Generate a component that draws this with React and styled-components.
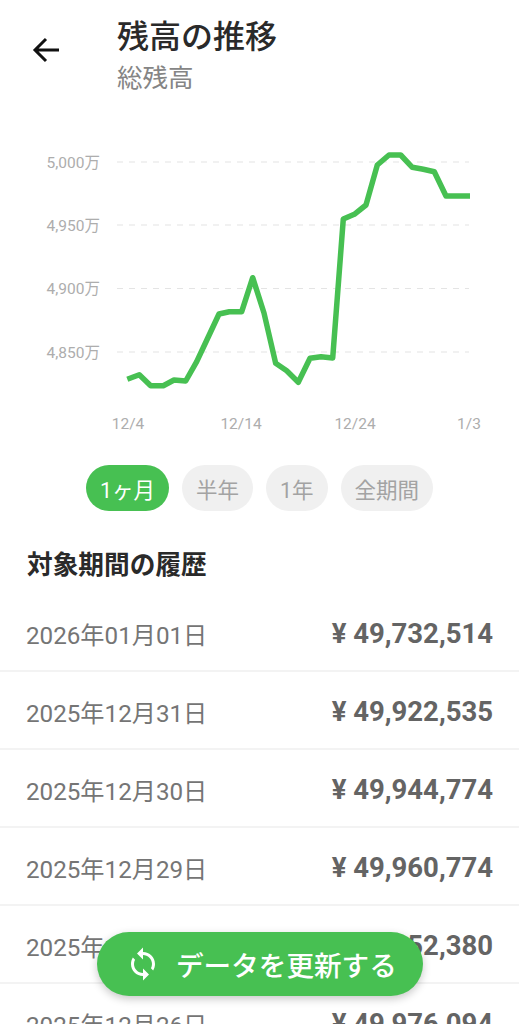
import React from "react"
import styled, { createGlobalStyle } from "styled-components"

const GlobalStyle = createGlobalStyle`
  html, body {
    margin: 0;
    padding: 0;
    background: #fff;
    font-family: Roboto, "Noto Sans CJK JP", sans-serif;
  }
`

const Screen = styled.div`
  position: relative;
  width: 519px;
  height: 1024px;
  overflow: hidden;
  background: #fff;
`

const Header = styled.header`
  display: flex;
  align-items: flex-start;
  height: 115px;
  padding: 15px 0 0 32px;
  box-sizing: border-box;
`

const BackButton = styled.div`
  width: 85px;
  padding-top: 21px;
  line-height: 0;
`

const Titles = styled.div`
  display: flex;
  flex-direction: column;
`

const Title = styled.h1`
  margin: 0;
  font-size: 32px;
  line-height: 44px;
  font-weight: 500;
  color: #2a2a2a;
`

const Subtitle = styled.div`
  font-size: 25.5px;
  line-height: 38px;
  color: #858585;
`

const Chart = styled.svg`
  display: block;
  width: 519px;
  height: 350px;
`

const GridLine = styled.line`
  stroke: #e4e4e4;
  stroke-width: 1.2;
  stroke-dasharray: 6 6;
`

const AxisLabel = styled.text`
  font-size: 15.5px;
  fill: #adadad;
`

const Ranges = styled.div`
  display: flex;
  justify-content: center;
  gap: 13px;
`

const RangePill = styled.div`
  display: flex;
  align-items: center;
  height: 46px;
  padding: 0 14px;
  border-radius: 23px;
  font-size: 21.5px;
  background: ${p => (p.$active ? "#47c052" : "#f0f0f0")};
  color: ${p => (p.$active ? "#fff" : "#a3a3a3")};
`

const SectionTitle = styled.h2`
  margin: 0;
  padding: 34px 27px 0;
  height: 49px;
  font-size: 25.7px;
  line-height: 40px;
  font-weight: 700;
  color: #2a2a2a;
`

const Row = styled.div`
  display: flex;
  align-items: center;
  justify-content: space-between;
  height: 78px;
  padding: 3px 26px 0;
  box-sizing: border-box;
  border-bottom: 2px solid #f3f3f3;
`

const RowDate = styled.span`
  font-size: 24.2px;
  color: #757575;
`

const RowAmount = styled.span`
  font-size: 27.5px;
  font-weight: 700;
  color: #646464;
`

const UpdateButton = styled.div`
  position: absolute;
  left: 97px;
  top: 932px;
  display: flex;
  align-items: center;
  gap: 15px;
  width: 326px;
  height: 64px;
  padding-left: 28px;
  box-sizing: border-box;
  border-radius: 32px;
  background: #47c052;
  color: #fff;
  font-size: 27.6px;
  font-weight: 500;
  box-shadow: 0 3px 8px rgba(0, 0, 0, 0.22);
`

const points = [
  [127.3, 379.3], [139.3, 374.7], [150.7, 385.7], [163.3, 385.7], [174, 380], [185.7, 381],
  [196.7, 361.7], [207.3, 339], [219, 314], [229.3, 311.7], [241.7, 311.7], [252.7, 277.7],
  [264, 313], [275.7, 363.3], [286.7, 370.7], [298.3, 382.3], [310, 358.3], [321, 356.7],
  [332.7, 358], [343.3, 219], [354.3, 214.3], [366, 205], [377.3, 165], [389, 155],
  [400.7, 155], [412.3, 167.3], [423.3, 169.3], [434.3, 171.7], [446, 196], [470, 196],
]

const CHART_TOP = 115
const yTicks = [
  { y: 162, label: "5,000万" },
  { y: 225, label: "4,950万" },
  { y: 288.5, label: "4,900万" },
  { y: 352, label: "4,850万" },
]
const xTicks = [
  { x: 128, label: "12/4" },
  { x: 241, label: "12/14" },
  { x: 355, label: "12/24" },
  { x: 469, label: "1/3" },
]

const history = [
  { date: "2026年01月01日", amount: "¥ 49,732,514" },
  { date: "2025年12月31日", amount: "¥ 49,922,535" },
  { date: "2025年12月30日", amount: "¥ 49,944,774" },
  { date: "2025年12月29日", amount: "¥ 49,960,774" },
  { date: "2025年12月28日", amount: "¥ 49,952,380" },
  { date: "2025年12月26日", amount: "¥ 49,976,094" },
]

const ranges = ["1ヶ月", "半年", "1年", "全期間"]

export default function App() {
  return (
    <Screen>
      <GlobalStyle />
      <Header>
        <BackButton>
          <svg width="28" height="28" viewBox="0 0 28 28" fill="none" stroke="#111" strokeWidth="3">
            <path d="M27 14H3M14 3L3 14l11 11" />
          </svg>
        </BackButton>
        <Titles>
          <Title>残高の推移</Title>
          <Subtitle>総残高</Subtitle>
        </Titles>
      </Header>
      <Chart viewBox={`0 ${CHART_TOP} 519 350`}>
        {yTicks.map(t => (
          <g key={t.label}>
            <GridLine x1="117" x2="469" y1={t.y} y2={t.y} />
            <AxisLabel x="100" y={t.y + 5.5} textAnchor="end">{t.label}</AxisLabel>
          </g>
        ))}
        {xTicks.map(t => (
          <AxisLabel key={t.label} x={t.x} y="429" textAnchor="middle">{t.label}</AxisLabel>
        ))}
        <polyline
          points={points.map(p => p.join(",")).join(" ")}
          fill="none"
          stroke="#47c052"
          strokeWidth="5.5"
          strokeLinejoin="round"
        />
      </Chart>
      <Ranges>
        {ranges.map((r, i) => (
          <RangePill key={r} $active={i === 0}>{r}</RangePill>
        ))}
      </Ranges>
      <SectionTitle>対象期間の履歴</SectionTitle>
      <div>
        {history.map(h => (
          <Row key={h.date}>
            <RowDate>{h.date}</RowDate>
            <RowAmount>{h.amount}</RowAmount>
          </Row>
        ))}
      </div>
      <UpdateButton>
        <svg width="36" height="36" viewBox="0 0 24 24" fill="#fff">
          <path d="M12 4V1L8 5l4 4V6c3.31 0 6 2.69 6 6 0 1.01-.25 1.97-.7 2.8l1.46 1.46C19.54 15.03 20 13.57 20 12c0-4.42-3.58-8-8-8zm0 14c-3.31 0-6-2.69-6-6 0-1.01.25-1.97.7-2.8L5.24 7.74C4.46 8.97 4 10.43 4 12c0 4.42 3.58 8 8 8v3l4-4-4-4v3z" />
        </svg>
        データを更新する
      </UpdateButton>
    </Screen>
  )
}
